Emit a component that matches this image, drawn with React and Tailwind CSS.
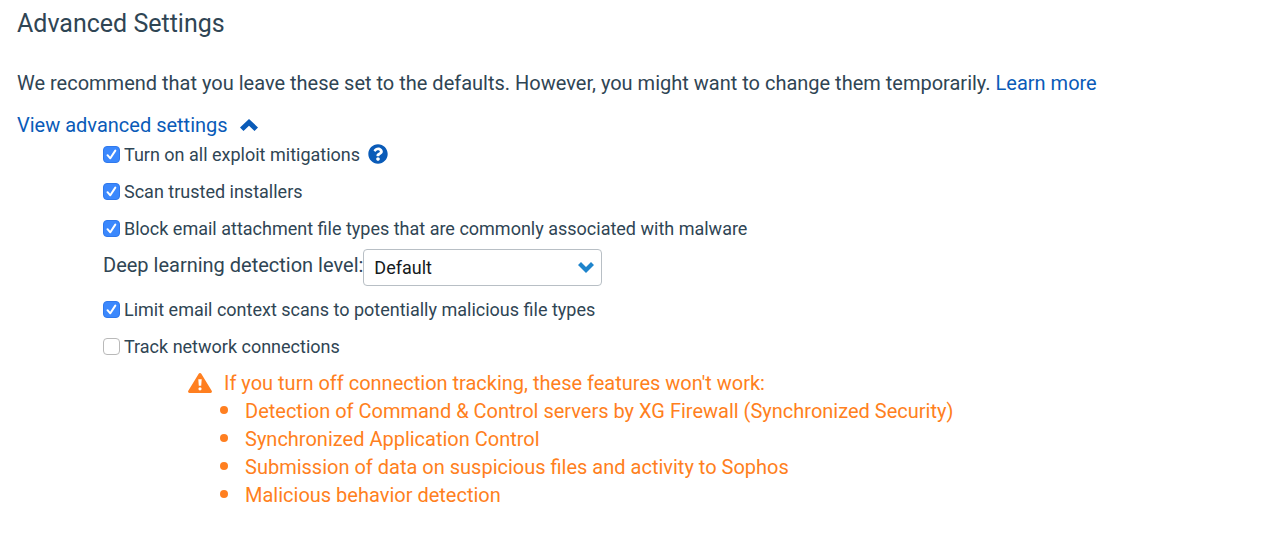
import { useState } from 'react';

const warnings = [
  'Detection of Command & Control servers by XG Firewall (Synchronized Security)',
  'Synchronized Application Control',
  'Submission of data on suspicious files and activity to Sophos',
  'Malicious behavior detection',
];

function CheckRow({ id, label, defaultChecked, children }) {
  return (
    <div className="flex h-[37px] items-center">
      <span className="grid shrink-0">
        <input
          id={id}
          type="checkbox"
          defaultChecked={defaultChecked}
          className="peer col-start-1 row-start-1 size-[17px] appearance-none rounded-sm border border-[#b9b9b9] bg-white checked:border-[#3079ec] checked:bg-[#3b88fd]"
        />
        <svg
          viewBox="0 0 17 17"
          className="pointer-events-none invisible col-start-1 row-start-1 size-[17px] peer-checked:visible"
          fill="none"
          stroke="#fff"
          strokeWidth="2"
          strokeLinecap="round"
          strokeLinejoin="round"
          aria-hidden="true"
        >
          <path d="M4.5 9.2 7.3 12.3 12.3 4.6" />
        </svg>
      </span>
      <label htmlFor={id} className="pl-1 text-lg">
        {label}
      </label>
      {children}
    </div>
  );
}

export default function App() {
  const [open, setOpen] = useState(true);

  return (
    <main className="px-[17px] pt-2 pb-8 font-[Roboto,sans-serif] text-[#2f4554]">
      <h1 className="text-[25px] leading-8">Advanced Settings</h1>

      <p className="mt-[29px] text-xl">
        We recommend that you leave these set to the defaults. However, you might want to change them temporarily.{' '}
        <a href="#learn-more" className="text-[#0a5bb8]">
          Learn more
        </a>
      </p>

      <button
        type="button"
        aria-expanded={open}
        onClick={() => setOpen(!open)}
        className="mt-[17px] flex items-center gap-3 text-xl leading-[22px] text-[#0a5bb8]"
      >
        View advanced settings
        <svg viewBox="0 0 18 13" className={open ? 'h-[13px] w-[18px]' : 'h-[13px] w-[18px] rotate-180'} fill="currentColor" aria-hidden="true">
          <path d="M9 0 18 8.500 14.500 12 9 6.800 3.500 12 0 8.500Z" />
        </svg>
      </button>

      {open && (
        <div className="pl-[86px]">
          <CheckRow id="exploit" label="Turn on all exploit mitigations" defaultChecked>
            <button type="button" aria-label="Help" className="ml-2 pb-0.5">
              <svg viewBox="0 0 512 512" className="size-5" fill="#0a5bb8" aria-hidden="true">
                <path d="M504 256c0 137-111 248-248 248S8 393 8 256 119 8 256 8s248 111 248 248zM262.700 90c-54.500 0-89.300 23-116.500 63.800-3.500 5.300-2.400 12.400 2.700 16.300l34.700 26.300c5.200 3.900 12.600 3 16.700-2.100 17.900-22.700 30.100-35.800 57.300-35.800 20.400 0 45.700 13.100 45.700 33 0 15-12.400 22.700-32.500 34C247.100 238.500 216 254.900 216 296v4c0 6.600 5.400 12 12 12h56c6.600 0 12-5.400 12-12v-1.300c0-28.500 83.200-29.600 83.200-106.700 0-58-60.200-102-116.500-102zM256 338c-25.400 0-46 20.600-46 46s20.600 46 46 46 46-20.600 46-46-20.600-46-46-46z" />
              </svg>
            </button>
          </CheckRow>
          <CheckRow id="installers" label="Scan trusted installers" defaultChecked />
          <CheckRow
            id="attachments"
            label="Block email attachment file types that are commonly associated with malware"
            defaultChecked
          />

          <div className="flex h-11 items-start">
            <label htmlFor="level" className="pt-1 text-xl">
              Deep learning detection level:
            </label>
            <div className="mt-0.5 grid items-center">
              <select
                id="level"
                className="col-start-1 row-start-1 h-[37px] w-[239px] appearance-none rounded-sm border border-[#b8bfc5] bg-white px-2.5 text-lg leading-[35px] text-[#15191c]"
              >
                <option>Default</option>
                <option>Aggressive</option>
              </select>
              <svg
                viewBox="0 0 16 11"
                className="pointer-events-none col-start-1 row-start-1 mr-2 h-[11px] w-4 justify-self-end"
                fill="#1e84cc"
                aria-hidden="true"
              >
                <path d="M8 11 0 3 3 0 8 5 13 0 16 3Z" />
              </svg>
            </div>
          </div>

          <CheckRow id="context" label="Limit email context scans to potentially malicious file types" defaultChecked />
          <CheckRow id="network" label="Track network connections" />

          <div className="mt-1 pl-[85px] text-xl text-[#ff7f20]">
            <div className="flex items-center gap-3">
              <svg viewBox="0 0 24 20" className="h-5 w-6" fill="currentColor" aria-hidden="true">
                <path
                  fillRule="evenodd"
                  d="M10.700.8a1.500 1.500 0 0 1 2.600 0L23.700 17.700A1.500 1.500 0 0 1 22.400 20H1.600A1.500 1.500 0 0 1 .3 17.700ZM10.300 6.200 10.800 12.800H13.200L13.700 6.200ZM12 14.200a1.600 1.600 0 1 0 0 3.200 1.600 1.600 0 0 0 0-3.200Z"
                />
              </svg>
              <p>If you turn off connection tracking, these features won't work:</p>
            </div>
            <ul className="pl-8">
              {warnings.map((text) => (
                <li
                  key={text}
                  className="flex items-center gap-[17px] before:mb-0.5 before:size-2 before:rounded-full before:bg-current"
                >
                  {text}
                </li>
              ))}
            </ul>
          </div>
        </div>
      )}
    </main>
  );
}
